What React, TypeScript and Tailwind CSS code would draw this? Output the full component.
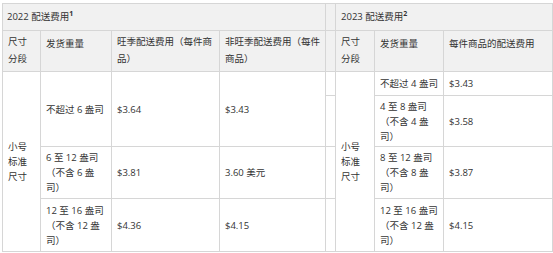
export default function App() {
  const th = "border border-[#d6d6d6] bg-[#f1f1f1] px-[5px] pt-[2px] align-top text-left font-normal leading-[17px]";
  const td = "border border-[#d6d6d6] px-[5px] align-middle leading-[15px]";
  const gapHead = "border border-[#d6d6d6] bg-[#f1f1f1]";
  const gap = "border border-[#d6d6d6]";

  return (
    <div className="w-[553px] h-[253px] overflow-hidden bg-white pl-[2px] pt-[3px] font-['Open_Sans','Noto_Sans_CJK_SC',sans-serif] text-[9.5px] text-[#333]">
      <table className="w-[550px] table-fixed border-collapse">
        <colgroup>
          <col className="w-[38px]" />
          <col className="w-[71px]" />
          <col className="w-[108px]" />
          <col className="w-[106px]" />
          <col className="w-[10px]" />
          <col className="w-[39px]" />
          <col className="w-[69px]" />
          <col className="w-[109px]" />
        </colgroup>
        <thead>
          <tr className="h-[27px]">
            <th colSpan={4} className="border border-[#d6d6d6] bg-[#f1f1f1] px-[4px] text-left align-middle font-normal">
              2022 配送费用<sup className="text-[7px] font-bold">1</sup>
            </th>
            <th className={gapHead}></th>
            <th colSpan={3} className="border border-[#d6d6d6] bg-[#f1f1f1] px-[5px] text-left align-middle font-normal">
              2023 配送费用<sup className="text-[7px] font-bold">2</sup>
            </th>
          </tr>
          <tr className="h-[41px]">
            <th className={th}>尺寸<br />分段</th>
            <th className={th}><div className="pt-[2px]">发货重量</div></th>
            <th className={th}>旺季配送费用（每件商<br />品）</th>
            <th className={th}>非旺季配送费用（每件<br />商品）</th>
            <th className={gapHead}></th>
            <th className={th}>尺寸<br />分段</th>
            <th className={th}><div className="pt-[2px]">发货重量</div></th>
            <th className={th}><div className="pt-[2px]">每件商品的配送费用</div></th>
          </tr>
        </thead>
        <tbody>
          <tr className="h-[24px]">
            <td rowSpan={4} className={td}>小号<br />标准<br />尺寸</td>
            <td rowSpan={2} className={td}>不超过 6 盎司</td>
            <td rowSpan={2} className={td}>$3.64</td>
            <td rowSpan={2} className={td}>$3.43</td>
            <td className={gap}></td>
            <td rowSpan={4} className={td}>小号<br />标准<br />尺寸</td>
            <td className={td}>不超过 4 盎司</td>
            <td className={td}>$3.43</td>
          </tr>
          <tr className="h-[51px]">
            <td className={gap}></td>
            <td className={td}>4 至 8 盎司<br />（不含 4 盎<br />司）</td>
            <td className={td}>$3.58</td>
          </tr>
          <tr className="h-[52px]">
            <td className={td}>6 至 12 盎司<br />（不含 6 盎<br />司）</td>
            <td className={td}>$3.81</td>
            <td className={td}>3.60 美元</td>
            <td className={gap}></td>
            <td className={td}>8 至 12 盎司<br />（不含 8 盎<br />司）</td>
            <td className={td}>$3.87</td>
          </tr>
          <tr className="h-[53px]">
            <td className={td}>12 至 16 盎司<br />（不含 12 盎<br />司）</td>
            <td className={td}>$4.36</td>
            <td className={td}>$4.15</td>
            <td className={gap}></td>
            <td className={td}>12 至 16 盎司<br />（不含 12 盎<br />司）</td>
            <td className={td}>$4.15</td>
          </tr>
        </tbody>
      </table>
    </div>
  );
}
